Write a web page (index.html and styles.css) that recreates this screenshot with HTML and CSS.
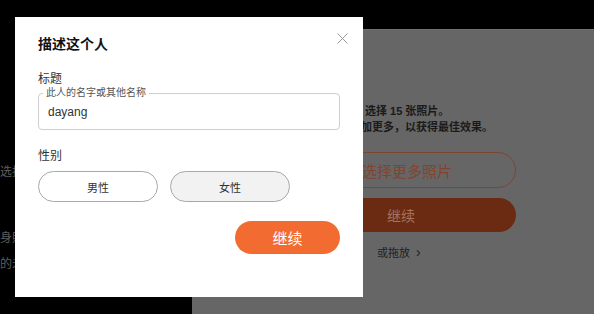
FILE: index.html
```html
<!DOCTYPE html>
<html lang="zh">
<head>
<meta charset="utf-8">
<title>描述这个人</title>
<link rel="stylesheet" href="styles.css">
</head>
<body>
<div class="page">
  <aside class="left">
    <p class="left-line l1">选择您的照片</p>
    <p class="left-line l2">身照片</p>
    <p class="left-line l3">的未来</p>
  </aside>
  <main class="panel">
    <p class="hint h1">选择 15 张照片。</p>
    <p class="hint h2">添加更多，以获得最佳效果。</p>
    <button class="btn-outline">选择更多照片</button>
    <button class="btn-fill">继续</button>
    <p class="drag">或拖放 <span class="chev">&#8250;</span></p>
  </main>
</div>

<div class="modal">
  <span class="close" aria-label="关闭">
    <svg width="11" height="11" viewBox="0 0 11 11"><path d="M0.5 0.5 L10.5 10.5 M10.5 0.5 L0.5 10.5" stroke="#9a9a9a" stroke-width="1" fill="none"/></svg>
  </span>
  <h2 class="title">描述这个人</h2>
  <div class="label lbl-title">标题</div>
  <div class="field">
    <span class="legend">此人的名字或其他名称</span>
    <span class="value">dayang</span>
  </div>
  <div class="label lbl-gender">性别</div>
  <div class="genders">
    <button class="gender">男性</button>
    <button class="gender selected">女性</button>
  </div>
  <div class="actions">
    <button class="continue">继续</button>
  </div>
</div>
</body>
</html>
```
FILE: styles.css
```css
* { box-sizing: border-box; }
html, body { margin: 0; padding: 0; }
body {
  width: 594px;
  height: 314px;
  overflow: hidden;
  background: #000;
  font-family: "Liberation Sans", "Noto Sans CJK SC", sans-serif;
  position: relative;
}
.page {
  display: grid;
  grid-template-columns: 192px 1fr;
  height: 314px;
}
.left {
  background: #000;
  padding-top: 164px;
}
.left-line {
  margin: 0;
  font-size: 12px;
  line-height: 16px;
  color: #5e5e5e;
  white-space: nowrap;
}
.left-line.l2 { margin-top: 50px; }
.left-line.l3 { margin-top: 10px; }

.panel {
  margin-top: 29px;
  background: #666;
  border-top: 1px solid #707070;
  padding-top: 73px;
  display: flex;
  flex-direction: column;
  align-items: flex-start;
}
.hint {
  margin: 0;
  font-size: 11px;
  line-height: 16px;
  font-weight: bold;
  color: #1a1a1a;
  white-space: nowrap;
}
.hint.h1 { padding-left: 173px; }
.hint.h2 { padding-left: 158px; }
.btn-outline {
  margin: 17px 0 0 94px;
  width: 230px;
  height: 36px;
  border: 1px solid #7c4534;
  border-radius: 18px;
  background: transparent;
  color: #82442f;
  font-family: inherit;
  font-size: 15px;
  padding: 0 0 0 12px;
}
.btn-fill {
  margin: 10px 0 0 94px;
  width: 230px;
  height: 34px;
  border: none;
  border-radius: 17px;
  background: #6a2b12;
  color: #a7735e;
  font-family: inherit;
  font-size: 14px;
  padding: 0;
}
.drag {
  margin: 12px 0 0 185px;
  font-size: 11px;
  line-height: 16px;
  color: #1e1e1e;
}
.chev { font-size: 14px; margin-left: 3px; }

.modal {
  position: absolute;
  left: 15px;
  top: 17px;
  width: 348px;
  height: 280px;
  background: #fff;
  padding: 16px 23px 0 23px;
}
.close {
  position: absolute;
  top: 16px;
  right: 15px;
  width: 11px;
  height: 11px;
  display: block;
}
.close svg { display: block; }
.title {
  margin: 0;
  font-size: 14px;
  line-height: 22px;
  font-weight: bold;
  color: #111;
}
.label {
  font-size: 12px;
  line-height: 18px;
  color: #333;
}
.lbl-title { margin-top: 15px; }
.field {
  position: relative;
  margin-top: 5px;
  height: 37px;
  border: 1px solid #cfcfcf;
  border-radius: 4px;
  display: flex;
  align-items: center;
  padding-left: 9px;
}
.legend {
  position: absolute;
  left: 4px;
  top: -7px;
  padding: 0 3px;
  background: #fff;
  font-size: 10px;
  line-height: 12px;
  color: #555;
}
.value {
  font-size: 12px;
  color: #333;
}
.lbl-gender { margin-top: 17px; }
.genders {
  display: flex;
  gap: 12px;
  margin-top: 6px;
}
.gender {
  width: 120px;
  height: 31px;
  border: 1px solid #a8a8a8;
  border-radius: 16px;
  background: #fff;
  font-family: inherit;
  font-size: 11px;
  color: #333;
  padding: 0;
}
.gender.selected { background: #f2f2f2; }
.actions {
  display: flex;
  justify-content: flex-end;
  margin-top: 19px;
}
.continue {
  width: 105px;
  height: 33px;
  border: none;
  border-radius: 17px;
  background: #f26c32;
  color: #fff;
  font-family: inherit;
  font-size: 15px;
  padding: 0;
}
```
